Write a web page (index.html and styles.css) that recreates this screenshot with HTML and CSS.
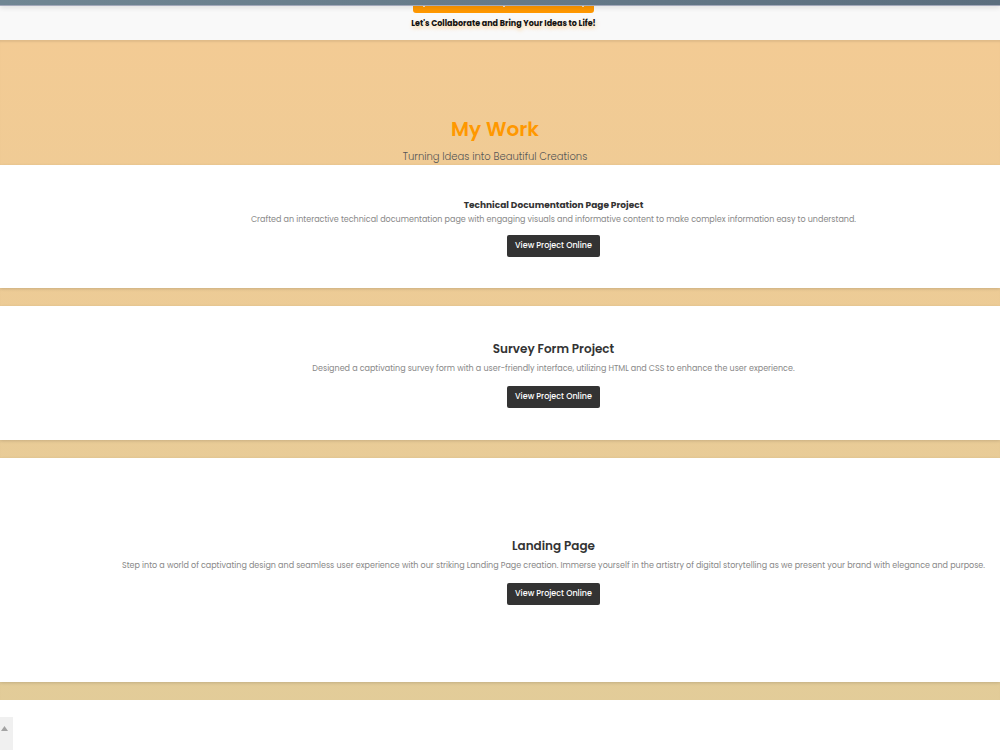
FILE: index.html
```
<!DOCTYPE html>
<html lang="en">
<head>
    <meta charset="UTF-8">
    <meta name="viewport" content="width=device-width, initial-scale=1.0">
    <title>My Work</title>
    <link rel="stylesheet" href="styles.css">
</head>
<body>
    <header class="topbar"></header>
    <section class="hero">
        <div class="hero-button"><span></span><span></span><span></span></div>
        <p class="hero-text">Let's Collaborate and Bring Your Ideas to Life!</p>
    </section>
    <main class="work">
        <div class="work-heading">
            <h1>My Work</h1>
            <p>Turning Ideas into Beautiful Creations</p>
        </div>
        <div class="projects">
            <article class="project project-small">
                <h4>Technical Documentation Page Project</h4>
                <p>Crafted an interactive technical documentation page with engaging visuals and informative content to make complex information easy to understand.</p>
                <a href="#" class="project-link">View Project Online</a>
            </article>
            <article class="project">
                <h3>Survey Form Project</h3>
                <p>Designed a captivating survey form with a user-friendly interface, utilizing HTML and CSS to enhance the user experience.</p>
                <a href="#" class="project-link">View Project Online</a>
            </article>
            <article class="project project-large">
                <h3>Landing Page</h3>
                <p>Step into a world of captivating design and seamless user experience with our striking Landing Page creation. Immerse yourself in the artistry of digital storytelling as we present your brand with elegance and purpose.</p>
                <a href="#" class="project-link">View Project Online</a>
            </article>
            <article class="project-preview">
                <div class="scroll-track">
                    <svg width="7" height="5" viewBox="0 0 7 5"><path d="M3.5 0L7 5H0z" fill="#a3a3a3"/></svg>
                </div>
            </article>
        </div>
    </main>
</body>
</html>
```
FILE: styles.css
```
* {
    box-sizing: border-box;
    margin: 0;
    padding: 0;
}
body {
    font-family: Poppins, Inter, "Open Sans", sans-serif;
    min-height: 100vh;
    display: flex;
    flex-direction: column;
    overflow: hidden;
    color: #333;
}
.topbar {
    height: 6px;
    background: linear-gradient(to right, #708693, #5b6e7e);
    border-bottom: 1px solid #a3a9ba;
    box-shadow: 0 2px 5px rgba(0, 0, 0, 0.1);
    position: relative;
}
.hero {
    background-color: #f9f9f9;
    height: 34px;
    padding-left: 7px;
    display: flex;
    flex-direction: column;
    align-items: center;
}
.hero-button {
    width: 181px;
    height: 7px;
    padding: 0 10px;
    background-color: #ff9800;
    border-radius: 0 0 3px 3px;
    display: flex;
    justify-content: space-between;
}
.hero-button span {
    width: 2px;
    height: 1px;
    background-color: #ffe0b0;
}
.hero-text {
    margin-top: 4px;
    font-size: 8px;
    line-height: 14px;
    font-weight: 700;
    color: #111;
    text-shadow: 1px 2px 4px rgba(255, 152, 0, 0.4);
}
.work {
    flex: 1;
    display: flex;
    flex-direction: column;
    background: linear-gradient(#f3cb94, #e1cc99);
    box-shadow: inset 0 3px 2px -1px rgba(0, 0, 0, 0.08);
}
.work-heading {
    padding: 73px 10px 0 0;
    text-align: center;
}
.work-heading h1 {
    font-size: 20px;
    line-height: 32px;
    font-weight: 600;
    color: #ff9800;
}
.work-heading p {
    margin-top: 4px;
    font-size: 10px;
    line-height: 16px;
    font-weight: 300;
    color: #555;
}
.projects {
    flex: 1;
    display: flex;
    flex-direction: column;
    gap: 18px;
}
.project {
    background-color: #fff;
    padding: 32px 0 32px 107px;
    display: flex;
    flex-direction: column;
    align-items: center;
    box-shadow: 0 1px 3px rgba(0, 0, 0, 0.15);
    white-space: nowrap;
}
.project h3 {
    font-size: 12px;
    line-height: 22px;
    font-weight: 600;
}
.project h4 {
    font-size: 9px;
    line-height: 14px;
    font-weight: 700;
}
.project p {
    font-size: 8px;
    line-height: 18px;
    color: #888;
}
.project-link {
    margin-top: 8px;
    padding: 0 8px;
    border-radius: 2px;
    background-color: #333;
    color: #fff;
    font-size: 8px;
    line-height: 22px;
    font-weight: 500;
    text-decoration: none;
}
.project-small {
    padding-top: 33px;
    padding-bottom: 31px;
}
.project-small p {
    line-height: 15px;
}
.project-large {
    padding-top: 77px;
    padding-bottom: 77px;
}
.project-preview {
    flex: 1;
    display: flex;
    padding-top: 17px;
    background-color: #fff;
}
.scroll-track {
    width: 13px;
    min-height: 33px;
    padding: 9px 1px;
    background-color: #f0f0f0;
    line-height: 0;
}
```
